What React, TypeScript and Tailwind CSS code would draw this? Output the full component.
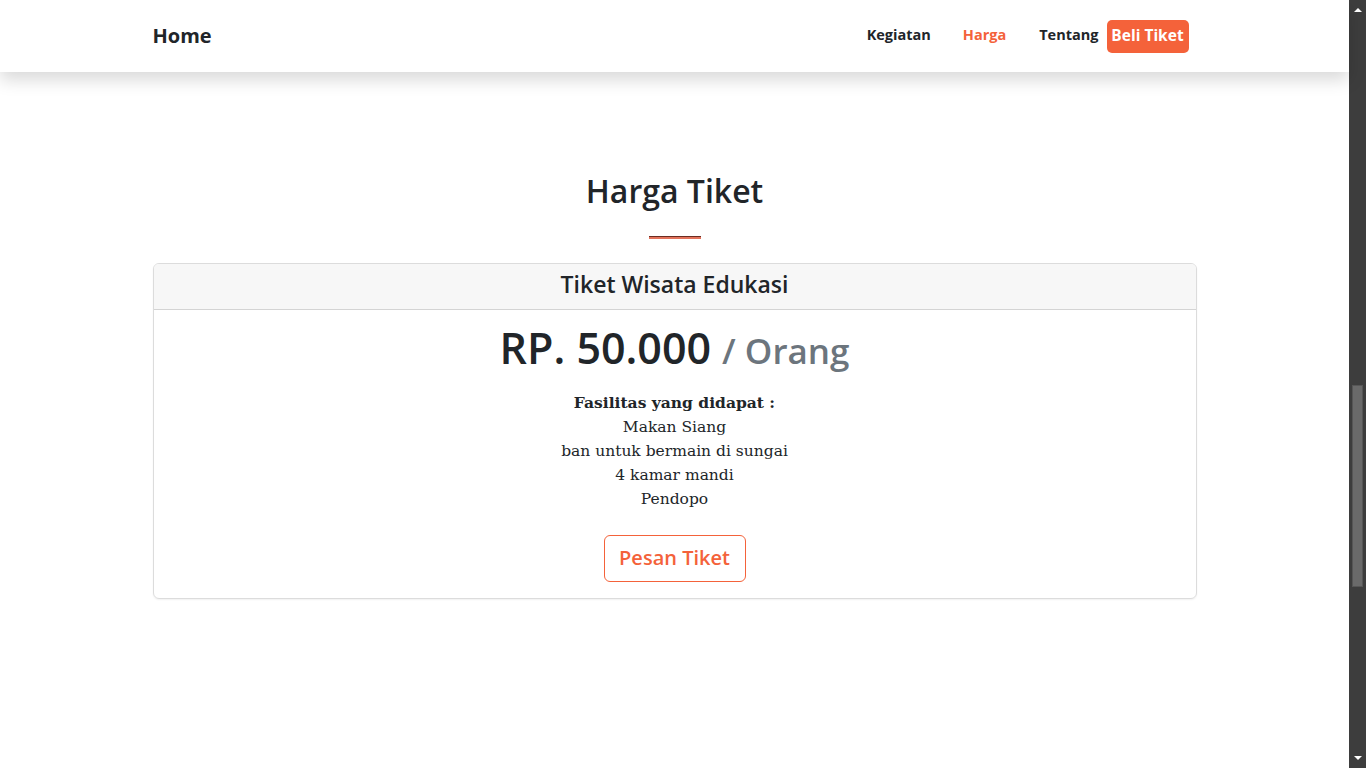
import React from "react";

const sans = { fontFamily: '"Open Sans", "Noto Sans", sans-serif' };
const serif = { fontFamily: '"DejaVu Serif", "Liberation Serif", serif' };

export default function App() {
  return (
    <div className="flex h-screen w-full overflow-hidden bg-white">
      <div className="relative flex-1 flex flex-col">
        <nav className="relative z-10 h-[72px] bg-white shadow-[0_0.5rem_1rem_rgba(0,0,0,0.15)]" style={sans}>
          <div className="mx-auto flex h-full w-[1044px] items-center justify-between">
            <span className="text-[20px] font-bold text-[#212529]">Home</span>
            <div className="flex items-center pr-2 font-bold">
              <span className="-mt-[3px] text-[14.5px] text-[#212529]">Kegiatan</span>
              <span className="-mt-[3px] ml-[32px] text-[14.5px] text-[#f4623a]">Harga</span>
              <span className="-mt-[3px] ml-[33px] text-[14.5px] text-[#212529]">Tentang</span>
              <span className="ml-2 flex h-[33px] w-[82px] items-center justify-center rounded-[5px] bg-[#f4623a] text-[15.5px] text-white">
                Beli Tiket
              </span>
            </div>
          </div>
        </nav>
        <main className="flex flex-col items-center pt-[97px]">
          <h2 className="text-[32px] font-semibold leading-[43px] text-[#212529]" style={sans}>
            Harga Tiket
          </h2>
          <div className="mt-[24px] h-[3px] w-[52px] border-t border-[#6b2d22] bg-[#e2725b]" />
          <div className="mt-[24px] w-[1044px] overflow-hidden rounded-[6px] border border-[#dcdcdc] shadow-[0_1px_2px_rgba(0,0,0,0.06)]">
            <div className="flex h-[46px] items-center justify-center border-b border-[#d4d4d4] bg-[#f7f7f7] pb-[4px]">
              <h3 className="text-[23px] font-semibold text-[#212529]" style={sans}>
                Tiket Wisata Edukasi
              </h3>
            </div>
            <div className="flex flex-col items-center pt-[11px] pb-[16px]">
              <div className="flex items-baseline leading-[53px]" style={sans}>
                <span className="text-[43px] font-semibold text-[#212529]">RP. 50.000</span>
                <span className="ml-[11px] text-[35px] font-semibold text-[#6c757d]">/ Orang</span>
              </div>
              <div className="mt-[14px] flex flex-col items-center text-[15.5px] leading-[24px] text-[#212529]" style={serif}>
                <span className="font-bold">Fasilitas yang didapat :</span>
                <span>Makan Siang</span>
                <span>ban untuk bermain di sungai</span>
                <span>4 kamar mandi</span>
                <span>Pendopo</span>
              </div>
              <button
                className="mt-[24px] flex h-[47px] w-[142px] items-center justify-center rounded-[6px] border border-[#f4623a] pb-[2px] text-[20px] font-semibold text-[#f4623a]"
                style={sans}
              >
                Pesan Tiket
              </button>
            </div>
          </div>
        </main>
      </div>
      <div className="relative flex w-[17px] flex-col items-center bg-[#3d3d3d]">
        <div className="mt-[8px] h-0 w-0 border-x-[4px] border-b-[4px] border-x-transparent border-b-white" />
        <div className="mt-[373px] h-[202px] w-[11px] border border-[#565656] bg-[#6a6a6a]" />
        <div className="mt-auto mb-[8px] h-0 w-0 border-x-[4px] border-t-[4px] border-x-transparent border-t-white" />
      </div>
    </div>
  );
}
